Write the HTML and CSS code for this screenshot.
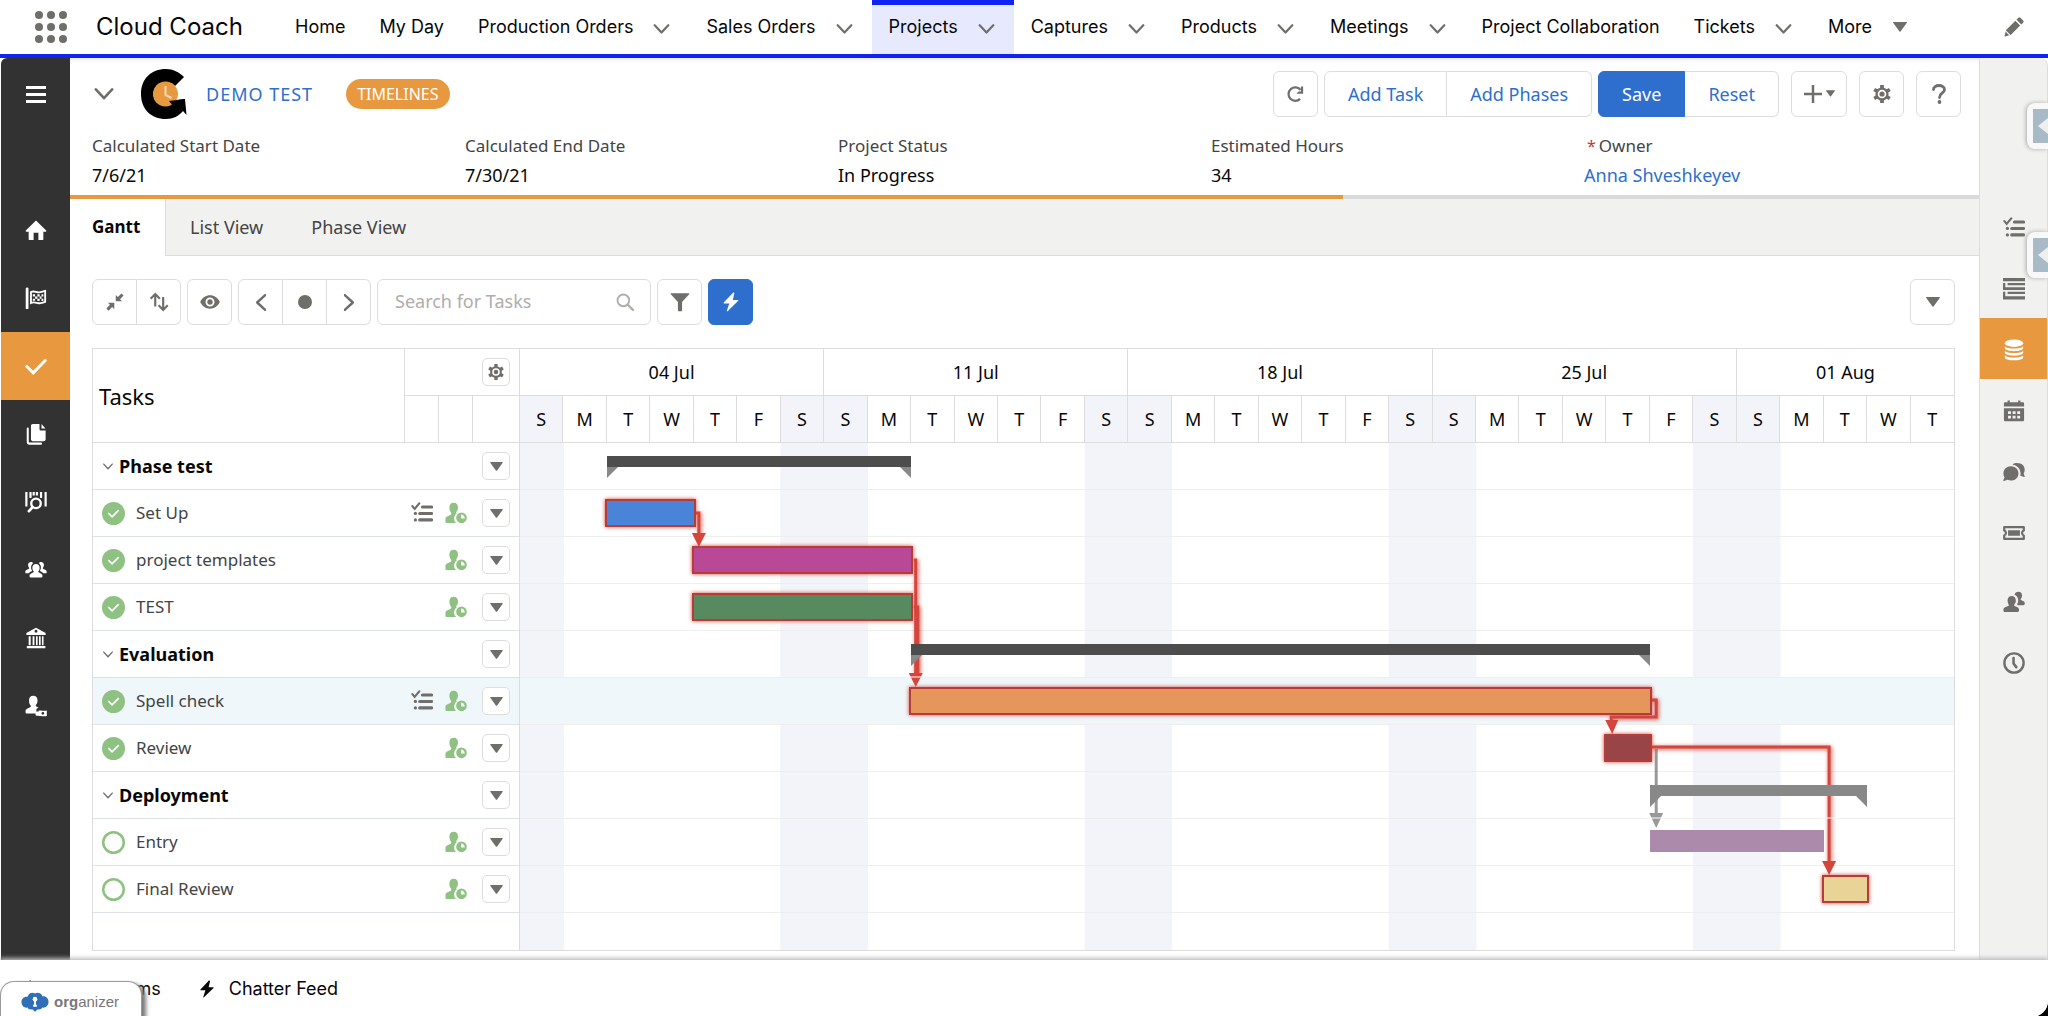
FILE: index.html
```
<!DOCTYPE html>
<html lang="en">
<head>
<meta charset="utf-8">
<title>DEMO TEST | Cloud Coach</title>
<link rel="stylesheet" href="styles.css">
</head>
<body>
<svg class="sprite" aria-hidden="true">
  <symbol id="chev" viewBox="0 0 16 10"><path d="M1.200 1.200 8 8.500 14.800 1.200" fill="none" stroke="currentColor" stroke-width="2.200" stroke-linecap="round" stroke-linejoin="round"/></symbol>
  <symbol id="down" viewBox="0 0 14 10"><path d="M.5 0h13a.5.5 0 0 1 .4.800L7.500 9.600a.7.7 0 0 1-1 0L.1.800A.5.5 0 0 1 .5 0z" fill="currentColor"/></symbol>
  <symbol id="home" viewBox="0 0 24 24"><path d="M12 1.500.9 12.600c-.4.400-.1 1.200.5 1.200H4v8.400c0 .4.300.8.800.8h4.600v-8h5.200v8h4.600c.5 0 .8-.4.800-.8v-8.400h2.600c.6 0 .9-.8.500-1.200z" fill="currentColor"/></symbol>
  <symbol id="flag" viewBox="0 0 24 24"><path d="M2.300 2v21" stroke="currentColor" stroke-width="3" stroke-linecap="round"/><path d="M6.500 5.500c3.500-1.800 6 .8 9 .4 2.200-.2 3.800-1 6.500-1.600v12c-2.500 1-4.500 1.600-7 1.400-3-.3-5-1.900-8.500-.2z" fill="none" stroke="currentColor" stroke-width="2"/><path d="M8.500 8h2.500v2.300H8.500zm5 0H16v2.300h-2.500zm4.500 0h2v2.300h-2zm-7 2.300h2.500v2.500H11zm5 0h2v2.500h-2zm-7.500 2.500H11V15H8.500zm5 0H16v2.400h-2.500zm4.500 0h2v2.400h-2z" fill="currentColor"/></symbol>
  <symbol id="check" viewBox="0 0 24 24"><path d="M2 12.500 9 19.500 22 6" fill="none" stroke="currentColor" stroke-width="3.200" stroke-linecap="round"/></symbol>
  <symbol id="files" viewBox="0 0 24 24"><path d="M8.500 1h7.300v5.500c0 1 .8 1.800 1.800 1.800h4.900v9.500c0 1.200-.8 2-2 2h-12c-1.200 0-2-.8-2-2V3c0-1.200.8-2 2-2zm9.500.2 4.300 4.700H18z" fill="currentColor"/><path d="M3 6v14.500C3 21.800 4 22.500 5 22.500h12.500" fill="none" stroke="currentColor" stroke-width="2.200" stroke-linecap="round"/></symbol>
  <symbol id="scan" viewBox="0 0 24 24"><path d="M1.500 1v16M6 1v6.500M9.500 1v4M13 1v4M17.500 1v6.500M22.500 1v16" stroke="currentColor" stroke-width="2.400" fill="none"/><circle cx="12" cy="13.500" r="5.200" fill="none" stroke="currentColor" stroke-width="2.600"/><path d="m8.300 17.500-4 4.500" stroke="currentColor" stroke-width="3" stroke-linecap="round"/></symbol>
  <symbol id="people" viewBox="0 0 26 24"><g fill="currentColor"><path d="M13 5c2.700 0 4.300 2 4.300 4.600 0 1.600-.6 3-1.500 3.900-.3.400-.3 1 .3 1.300l3 1.500c1.200.6 1.500 1.200 1.500 2.500v1c0 .8-.6 1.200-1.200 1.200H6.600c-.6 0-1.200-.4-1.200-1.200v-1c0-1.300.3-1.900 1.500-2.500l3-1.500c.6-.3.600-.9.300-1.300-.9-.9-1.500-2.300-1.500-3.900C8.700 7 10.300 5 13 5z"/><path d="M7.300 2.500C5 2.500 3.600 4 3.600 6.200c0 1.400.5 2.500 1.300 3.300.3.400.2.800-.2 1.100l-3 1.500C.6 12.700.4 13.300.4 14.300v.6c0 .8.400 1 1 1h2.800c.7-1 2.200-1.700 4.300-2.700-.9-1.200-1.400-2.800-1.300-4.600.1-1.900.9-3.500 2.400-4.600-.5-.9-1.200-1.500-2.300-1.500zM18.700 2.500c2.300 0 3.700 1.500 3.700 3.700 0 1.400-.5 2.500-1.300 3.300-.3.400-.2.800.2 1.100l3 1.500c1.100.6 1.300 1.200 1.300 2.200v.6c0 .8-.4 1-1 1h-2.800c-.7-1-2.200-1.700-4.300-2.700.9-1.200 1.400-2.800 1.300-4.600-.1-1.900-.9-3.500-2.400-4.600.5-.9 1.200-1.500 2.300-1.500z"/></g></symbol>
  <symbol id="bank" viewBox="0 0 24 24"><path fill-rule="evenodd" d="M12 .8 22.500 6.500v2.300h-21V6.500zM12 3a1.500 1.500 0 1 0 0 3.200A1.500 1.500 0 0 0 12 3zM4 10h2.200v10H4zm4.300 0h2v10h-2zm3.700 0h1.800v10H12zm3.300 0h1.800v10h-1.800zm3.200 0h1.700v10h-1.700zM2 20.800h20.200v2.400H2z" fill="currentColor"/></symbol>
  <symbol id="usercash" viewBox="0 0 24 24"><path d="M9 .8c3 0 4.700 2.200 4.700 5.100 0 1.900-.7 3.500-1.700 4.700-.5.700-.5 1.600.4 2l2.600 1.200c-1.500 0-2.600 1-2.600 2.500v4H2.200C1 20.300.6 19.700.6 18.900v-1.300c0-1.300.5-2 1.700-2.600l3.400-1.600c.8-.5.900-1.400.3-2.100C5 10 4.400 8.400 4.400 5.900 4.400 3 6 .8 9 .8z" fill="currentColor"/><rect x="11.500" y="18" width="5" height="4.500" rx="1" fill="currentColor"/><path fill-rule="evenodd" d="M15 17c3-.8 5 1 8.800 0v6c-3.500 1-5.800-.8-8.800 0zm4.500 1.500a1.500 1.500 0 1 0 0 3 1.500 1.500 0 0 0 0-3z" fill="currentColor"/></symbol>
  <symbol id="usertime" viewBox="0 0 24 24"><path d="M9.500.8c3 0 4.700 2.200 4.700 5.100 0 1.900-.7 3.500-1.700 4.700-.3.600-.3 1.300.2 1.700a7 7 0 0 0-.7 10.700H2C1 23 .5 22.500.5 21.500v-3.200c0-1.300.5-2 1.700-2.600l4-1.900c.8-.5.900-1.500.3-2.300-1-1.400-1.700-3-1.700-5.600C4.800 3 6.500.8 9.500.8z" fill="currentColor"/><path fill-rule="evenodd" d="M18 11.500a5.800 5.800 0 1 1 0 11.600 5.800 5.800 0 0 1 0-11.600zm-.4 2v4.400h4c0-2.500-1.500-4.400-4-4.400z" fill="currentColor"/></symbol>
  <symbol id="list" viewBox="0 0 24 24"><path d="m1.500 4.500 2.500 3L9 1.500" fill="none" stroke="currentColor" stroke-width="2.400" stroke-linecap="round"/><path d="M12.500 5.500h10M9.500 12.500h13M9.500 19.500h13" stroke="currentColor" stroke-width="3.400" stroke-linecap="round"/><circle cx="4.800" cy="12.500" r="1.800" fill="currentColor"/><circle cx="4.800" cy="19.500" r="1.800" fill="currentColor"/></symbol>
  <symbol id="outline" viewBox="0 0 24 24"><path d="M0 0h24v3.500H0zM5 5.500h19V8H5zM0 5.500h2.500V10H24v3H0zM5 15h19v2.500H5zM0 15h2.500v5H24v3.500H0z" fill="currentColor"/></symbol>
  <symbol id="data" viewBox="0 0 24 24"><ellipse cx="12" cy="4.600" rx="10" ry="4" fill="currentColor"/><path d="M2 7.800c2 3.400 18 3.400 20 0v2c0 4.600-20 4.600-20 0zm0 5c2 3.400 18 3.400 20 0v2c0 4.600-20 4.600-20 0zm0 5c2 3.400 18 3.400 20 0v2c0 4.600-20 4.600-20 0z" fill="currentColor"/></symbol>
  <symbol id="cal" viewBox="0 0 24 24"><path fill-rule="evenodd" d="M5 .5h2.500v2h9v-2H19v2h2.500c1 0 1.500.5 1.500 1.500v3H1V4c0-1 .5-1.500 1.500-1.500H5zM1 9h22v12.500c0 1-.5 1.700-1.500 1.700h-19C1.500 23.200 1 22.500 1 21.500zm4.500 3.300v3h3.200v-3zm5 0v3h3.200v-3zm5 0v3h3.200v-3zm-10 5v3h3.200v-3zm5 0v3h3.200v-3zm5 0v3h3.200v-3z" fill="currentColor"/></symbol>
  <symbol id="chat" viewBox="0 0 24 24"><path d="M8.700 5.800c4.600 0 8.200 3.300 8.200 7.700s-3.600 7.700-8.200 7.700c-1.300 0-2.500-.3-3.600-.8L1 21.700c-.5.200-.8-.2-.6-.6l1.300-3.300A7.600 7.600 0 0 1 .5 13.500c0-4.400 3.600-7.700 8.200-7.700z" fill="currentColor"/><path d="M15.500 2.300c4.600 0 8.200 3 8.200 7.200 0 1.500-.4 2.900-1.200 4l1.200 3.500c.1.400-.2.700-.6.500l-4.200-1.300c.2-.8.300-1.700.3-2.600 0-5-3.900-9.200-9-9.900a9 9 0 0 1 5.300-1.400z" fill="currentColor"/></symbol>
  <symbol id="ticket" viewBox="0 0 24 24"><path d="M1.300 5.500h21.400v3.700a3 3 0 0 0 0 5.600v3.700H1.300v-3.700a3 3 0 0 0 0-5.600z" fill="none" stroke="currentColor" stroke-width="2.400" stroke-linejoin="round"/><path d="M5.500 9h13v6h-13z" fill="currentColor"/></symbol>
  <symbol id="pair" viewBox="0 0 24 24"><path d="M9.500 5.500c2.800 0 4.500 2 4.500 4.800 0 1.700-.6 3.200-1.600 4.300-.4.600-.4 1.300.3 1.700l3 1.500c1.200.6 1.700 1.200 1.700 2.500v1c0 1-.6 1.700-1.500 1.700H2c-1 0-1.500-.7-1.500-1.700v-1c0-1.300.5-1.900 1.700-2.500l3.500-1.500c.8-.4.900-1.100.4-1.700C5.500 13.500 5 12 5 10.300 5 7.500 6.700 5.500 9.500 5.500z" fill="currentColor"/><path d="M17 .8c2.400 0 3.800 1.700 3.800 4.100 0 1.500-.5 2.700-1.300 3.600-.4.600-.4 1 .2 1.400l2.600 1.300c1 .5 1.400 1 1.400 2v.8c0 .9-.5 1.500-1.300 1.500h-6.200c-.8-.5-.7-1-.5-1.700 1-1.700 1-3 .8-4.500-.3-2.500-1.700-4.500-3.900-5.300C12.900 2.200 14.600.8 17 .8z" fill="currentColor"/></symbol>
  <symbol id="clock" viewBox="0 0 24 24"><circle cx="12" cy="12" r="10.500" fill="none" stroke="currentColor" stroke-width="2.600"/><path d="M11.500 6.500v6l3 4" fill="none" stroke="currentColor" stroke-width="2.800" stroke-linecap="round"/></symbol>
  <symbol id="gear" viewBox="0 0 24 24"><path d="M12 0v24M1.600 6l20.800 12M1.600 18 22.400 6" stroke="currentColor" stroke-width="5" fill="none"/><circle cx="12" cy="12" r="8.800" fill="currentColor"/><circle cx="12" cy="12" r="4.600" fill="none" stroke="#fff" stroke-width="2.300"/></symbol>
  <symbol id="pencil" viewBox="0 0 24 24"><path d="m2.600 15.500 11-11 5.800 5.800-11 11-7 2c-.5.100-.9-.3-.8-.8zM15 3.200l2.200-2.200c.7-.7 1.800-.7 2.500 0l3.300 3.300c.7.700.7 1.800 0 2.500L20.800 9z" fill="currentColor"/><path d="m2.300 17 4.700 4.700" stroke="#fff" stroke-width="1.300"/></symbol>
  <symbol id="bolt" viewBox="0 0 24 24"><path d="M14.500.8 3.300 12.700c-.4.500-.1 1.100.5 1.100h6.100L7 22.500c-.2.700.6 1 1 .6L20.700 10.600c.5-.5.100-1.100-.5-1.100h-6L16 1.500c.2-.8-.9-1.300-1.500-.7z" fill="currentColor"/></symbol>
  <symbol id="funnel" viewBox="0 0 24 24"><path d="M1.500 1.500h21c.7 0 1 .8.500 1.300L14.500 12v10.300c0 .4-.3.700-.7.700h-3.600c-.4 0-.7-.3-.7-.7V12L1 2.800C.5 2.300.8 1.500 1.500 1.500z" fill="currentColor"/></symbol>
  <symbol id="search" viewBox="0 0 24 24"><circle cx="9.800" cy="9.800" r="7.800" fill="none" stroke="currentColor" stroke-width="2.500"/><path d="m15.500 15.500 7 7" stroke="currentColor" stroke-width="3" stroke-linecap="round"/></symbol>
  <symbol id="eye" viewBox="0 0 24 24"><path fill-rule="evenodd" d="M12 4c5 0 9.200 3 11.500 7.400.2.400.2.800 0 1.200C21.200 17 17 20 12 20S2.800 17 .5 12.600a1.300 1.300 0 0 1 0-1.200C2.800 7 7 4 12 4zm0 2.600a5.400 5.400 0 1 0 0 10.800 5.400 5.400 0 0 0 0-10.800z" fill="currentColor"/><circle cx="12" cy="12" r="3.200" fill="currentColor"/></symbol>
  <symbol id="shrink" viewBox="0 0 24 24"><path d="M13 2.500v8.500h8.500l-2.800-2.800L23.500 3.400 20.600.5 15.800 5.300zM11 21.500V13H2.500l2.800 2.800L.5 20.600l2.900 2.900 4.800-4.800z" fill="currentColor"/></symbol>
  <symbol id="sort" viewBox="0 0 24 24"><path d="M7.500 17.500V3M2 8l5.500-5.500L13 8" fill="none" stroke="currentColor" stroke-width="2.600"/><path d="M17 6v15M11.500 16l5.500 5.500 5.500-5.500" fill="none" stroke="currentColor" stroke-width="2.600"/></symbol>
  <symbol id="refresh" viewBox="0 0 24 24"><path d="M17.500 18.500A9 9 0 1 1 18 6.500" fill="none" stroke="currentColor" stroke-width="3"/><path d="M21.500 2v9.500h-9l3-3h3V2z" fill="currentColor"/></symbol>
  <symbol id="done" viewBox="0 0 24 24"><circle cx="12" cy="12" r="12" fill="#8ec182"/><path d="m7 12 3.500 3.500 6.500-6.500" fill="none" stroke="#fff" stroke-width="1.800" stroke-linecap="round"/></symbol>
  <symbol id="open" viewBox="0 0 24 24"><circle cx="12" cy="12" r="10.700" fill="#fff" stroke="#8ec182" stroke-width="2.600"/></symbol>
</svg>

<header class="topnav">
  <button class="waffle" aria-label="App launcher"><i></i><i></i><i></i><i></i><i></i><i></i><i></i><i></i><i></i></button>
  <span class="app-name">Cloud Coach</span>
  <nav class="nav-items" aria-label="Main">
    <a href="#">Home</a>
    <a href="#">My Day</a>
    <a href="#">Production Orders<svg class="nav-chev"><use href="#chev"/></svg></a>
    <a href="#">Sales Orders<svg class="nav-chev"><use href="#chev"/></svg></a>
    <a href="#" class="current">Projects<svg class="nav-chev"><use href="#chev"/></svg></a>
    <a href="#">Captures<svg class="nav-chev"><use href="#chev"/></svg></a>
    <a href="#">Products<svg class="nav-chev"><use href="#chev"/></svg></a>
    <a href="#">Meetings<svg class="nav-chev"><use href="#chev"/></svg></a>
    <a href="#">Project Collaboration</a>
    <a href="#">Tickets<svg class="nav-chev"><use href="#chev"/></svg></a>
    <a href="#">More<svg class="nav-down"><use href="#down"/></svg></a>
  </nav>
  <button class="plain edit" aria-label="Edit navigation"><svg class="ic20"><use href="#pencil"/></svg></button>
</header>

<div class="shell">
  <nav class="rail-left" aria-label="Sections">
    <button class="menu" aria-label="Menu"><i></i><i></i><i></i></button>
    <a href="#" aria-label="Home"><svg><use href="#home"/></svg></a>
    <a href="#" aria-label="Milestones"><svg><use href="#flag"/></svg></a>
    <a href="#" class="active" aria-label="Tasks"><svg><use href="#check"/></svg></a>
    <a href="#" aria-label="Files"><svg><use href="#files"/></svg></a>
    <a href="#" aria-label="Products"><svg><use href="#scan"/></svg></a>
    <a href="#" aria-label="Team"><svg><use href="#people"/></svg></a>
    <a href="#" aria-label="Financials"><svg><use href="#bank"/></svg></a>
    <a href="#" aria-label="Rates"><svg><use href="#usercash"/></svg></a>
  </nav>

  <main>
    <section class="record">
      <div class="record-top">
        <button class="plain" aria-label="Collapse"><svg class="collapse"><use href="#chev"/></svg></button>
        <svg class="logo" viewBox="0 0 46 50" aria-hidden="true">
          <path d="M43 8 34 17C31 14 28 13 24.500 13c-7 0-12 5-12 12s5 12 12 12c2 0 4-.5 6-2l-2-3 15.500-2 1.500 16-3.500-4C38 47 32 50 25 50 10 50 0 40 0 25S10 0 25 0c7 0 13 3 18 8z"/>
          <circle cx="24.500" cy="25" r="12.500" fill="#e8993f"/>
          <path d="M24.500 17v9l6 3" fill="none" stroke="#f7dcb9" stroke-width="2"/>
          <path d="m28 32 16-2-8 12z"/>
        </svg>
        <h1><a href="#">DEMO TEST</a></h1>
        <span class="badge">TIMELINES</span>
        <div class="actions">
          <button class="btn sq" aria-label="Refresh"><svg class="ic18"><use href="#refresh"/></svg></button>
          <div class="group"><button class="btn">Add Task</button><button class="btn">Add Phases</button></div>
          <div class="group"><button class="btn primary">Save</button><button class="btn">Reset</button></div>
          <button class="btn add" aria-label="Add"><svg class="plus" viewBox="0 0 18 18"><path d="M9 0v18M0 9h18" stroke="currentColor" stroke-width="2.500"/></svg><svg class="tiny"><use href="#down"/></svg></button>
          <button class="btn sq apart" aria-label="Settings"><svg class="ic18"><use href="#gear"/></svg></button>
          <button class="btn sq apart" aria-label="Help"><svg class="help" viewBox="0 0 14 20"><path d="M1.500 5.500C1.500 3 4 1.500 7 1.500s5.500 1.500 5.500 4.200C12.500 9 7.500 9 7.500 13.500" fill="none" stroke="currentColor" stroke-width="2.800" stroke-linecap="round"/><circle cx="7.500" cy="18" r="1.900" fill="currentColor"/></svg></button>
        </div>
      </div>
      <dl class="fields">
        <div><dt>Calculated Start Date</dt><dd>7/6/21</dd></div>
        <div><dt>Calculated End Date</dt><dd>7/30/21</dd></div>
        <div><dt>Project Status</dt><dd>In Progress</dd></div>
        <div><dt>Estimated Hours</dt><dd>34</dd></div>
        <div><dt><abbr title="required">*</abbr>Owner</dt><dd><a href="#">Anna Shveshkeyev</a></dd></div>
      </dl>
      <div class="progress"><span style="width:66.7%"></span></div>
    </section>

    <nav class="tabs" aria-label="Views">
      <a href="#" class="selected">Gantt</a>
      <div class="other-tabs"><a href="#">List View</a><a href="#">Phase View</a></div>
    </nav>

    <section class="content">
      <div class="toolbar">
        <div class="group"><button class="btn sq" aria-label="Collapse all"><svg class="ic18"><use href="#shrink"/></svg></button><button class="btn sq" aria-label="Sort"><svg class="ic20"><use href="#sort"/></svg></button></div>
        <button class="btn sq" aria-label="Show"><svg class="ic20"><use href="#eye"/></svg></button>
        <div class="group"><button class="btn sq" aria-label="Earlier"><svg class="side left"><use href="#chev"/></svg></button><button class="btn sq" aria-label="Today"><span class="dot"></span></button><button class="btn sq" aria-label="Later"><svg class="side right"><use href="#chev"/></svg></button></div>
        <label class="search"><input type="search" placeholder="Search for Tasks" aria-label="Search for Tasks"><svg class="ic18"><use href="#search"/></svg></label>
        <button class="btn sq" aria-label="Filter"><svg class="ic20"><use href="#funnel"/></svg></button>
        <button class="btn sq primary" aria-label="Quick actions"><svg class="ic20"><use href="#bolt"/></svg></button>
        <button class="btn sq last" aria-label="More options"><svg class="down"><use href="#down"/></svg></button>
      </div>

      <div class="gantt">
        <table class="tasks">
          <colgroup><col><col class="c-list"><col class="c-user"><col class="c-menu"></colgroup>
          <thead>
            <tr><th rowspan="2" class="title">Tasks</th><th colspan="3" class="cfg"><button class="mini" aria-label="Column settings"><svg class="ic15"><use href="#gear"/></svg></button></th></tr>
            <tr><th></th><th></th><th></th></tr>
          </thead>
          <tbody>
            <tr class="phase"><td colspan="3"><div class="cell"><svg><use href="#chev"/></svg>Phase test</div></td><td><button class="mini" aria-label="Phase test menu"><svg class="down"><use href="#down"/></svg></button></td></tr>
            <tr><td><div class="cell"><svg><use href="#done"/></svg>Set Up</div></td><td><svg class="lst"><use href="#list"/></svg></td><td><svg class="usr"><use href="#usertime"/></svg></td><td><button class="mini" aria-label="Set Up menu"><svg class="down"><use href="#down"/></svg></button></td></tr>
            <tr><td><div class="cell"><svg><use href="#done"/></svg>project templates</div></td><td></td><td><svg class="usr"><use href="#usertime"/></svg></td><td><button class="mini" aria-label="project templates menu"><svg class="down"><use href="#down"/></svg></button></td></tr>
            <tr><td><div class="cell"><svg><use href="#done"/></svg>TEST</div></td><td></td><td><svg class="usr"><use href="#usertime"/></svg></td><td><button class="mini" aria-label="TEST menu"><svg class="down"><use href="#down"/></svg></button></td></tr>
            <tr class="phase"><td colspan="3"><div class="cell"><svg><use href="#chev"/></svg>Evaluation</div></td><td><button class="mini" aria-label="Evaluation menu"><svg class="down"><use href="#down"/></svg></button></td></tr>
            <tr class="hover"><td><div class="cell"><svg><use href="#done"/></svg>Spell check</div></td><td><svg class="lst"><use href="#list"/></svg></td><td><svg class="usr"><use href="#usertime"/></svg></td><td><button class="mini" aria-label="Spell check menu"><svg class="down"><use href="#down"/></svg></button></td></tr>
            <tr><td><div class="cell"><svg><use href="#done"/></svg>Review</div></td><td></td><td><svg class="usr"><use href="#usertime"/></svg></td><td><button class="mini" aria-label="Review menu"><svg class="down"><use href="#down"/></svg></button></td></tr>
            <tr class="phase"><td colspan="3"><div class="cell"><svg><use href="#chev"/></svg>Deployment</div></td><td><button class="mini" aria-label="Deployment menu"><svg class="down"><use href="#down"/></svg></button></td></tr>
            <tr><td><div class="cell"><svg><use href="#open"/></svg>Entry</div></td><td></td><td><svg class="usr"><use href="#usertime"/></svg></td><td><button class="mini" aria-label="Entry menu"><svg class="down"><use href="#down"/></svg></button></td></tr>
            <tr><td><div class="cell"><svg><use href="#open"/></svg>Final Review</div></td><td></td><td><svg class="usr"><use href="#usertime"/></svg></td><td><button class="mini" aria-label="Final Review menu"><svg class="down"><use href="#down"/></svg></button></td></tr>
          </tbody>
        </table>

        <div class="chart">
          <div class="weeks"><span>04 Jul</span><span>11 Jul</span><span>18 Jul</span><span>25 Jul</span><span>01 Aug</span></div>
          <div class="days">
            <span>S</span><span>M</span><span>T</span><span>W</span><span>T</span><span>F</span><span>S</span>
            <span>S</span><span>M</span><span>T</span><span>W</span><span>T</span><span>F</span><span>S</span>
            <span>S</span><span>M</span><span>T</span><span>W</span><span>T</span><span>F</span><span>S</span>
            <span>S</span><span>M</span><span>T</span><span>W</span><span>T</span><span>F</span><span>S</span>
            <span>S</span><span>M</span><span>T</span><span>W</span><span>T</span>
          </div>
          <div class="plot">
            <div class="lane"><div class="summary done" style="--start:2;--days:7"></div></div>
            <div class="lane"><div class="bar critical blue" style="--start:2;--days:2"></div></div>
            <div class="lane"><div class="bar critical magenta" style="--start:4;--days:5"></div></div>
            <div class="lane"><div class="bar critical green" style="--start:4;--days:5"></div></div>
            <div class="lane"><div class="summary done" style="--start:9;--days:17"></div></div>
            <div class="lane hover"><div class="bar critical orange" style="--start:9;--days:17"></div></div>
            <div class="lane"><div class="bar critical brick" style="--start:25;--days:1"></div></div>
            <div class="lane"><div class="summary" style="--start:26;--days:5"></div></div>
            <div class="lane"><div class="bar mauve" style="--start:26;--days:4"></div></div>
            <div class="lane"><div class="bar critical sand" style="--start:30;--days:1"></div></div>
            <svg class="links" viewBox="0 0 1435 507" preserveAspectRatio="none" aria-hidden="true">
              <path class="soft" d="M1137 306v66"/>
              <path class="soft-head" d="M1130 370h14l-7 15z"/>
              <g class="hot">
                <path d="M176 70h3v22"/>
                <path d="M394 117h2v115M394 164h4v68"/>
                <path d="M1132 257h5v17h-45v6"/>
                <path d="M1132 304h178v116"/>
              </g>
              <path class="hot-head" d="M172 90h14l-7 14zM389 230h14l-7 14zM1086 277h13l-6 14zM1303 418h14l-7 14z"/>
              <path class="cut" d="M387 234h18M1128 375h18M1302 375h16"/>
            </svg>
          </div>
        </div>
      </div>
    </section>
  </main>

  <nav class="rail-right" aria-label="Panels">
    <a href="#" aria-label="Checklist"><svg><use href="#list"/></svg></a>
    <a href="#" aria-label="Outline"><svg><use href="#outline"/></svg></a>
    <a href="#" class="active" aria-label="Data"><svg><use href="#data"/></svg></a>
    <a href="#" aria-label="Calendar"><svg><use href="#cal"/></svg></a>
    <a href="#" aria-label="Chatter"><svg><use href="#chat"/></svg></a>
    <a href="#" aria-label="Tickets"><svg><use href="#ticket"/></svg></a>
    <a href="#" class="split" aria-label="Contacts"><svg><use href="#pair"/></svg></a>
    <a href="#" aria-label="History"><svg><use href="#clock"/></svg></a>
    <button class="drawer first" aria-label="Open drawer"><span></span></button>
    <button class="drawer second" aria-label="Open drawer"><span></span></button>
  </nav>
</div>

<footer class="utility">
  <button class="plain"><svg class="ic18"><use href="#bolt"/></svg>Recent Items</button>
  <button class="plain"><svg class="ic18"><use href="#bolt"/></svg>Chatter Feed</button>
  <div class="organizer">
    <svg viewBox="0 0 30 22" aria-hidden="true"><path d="M7 5.500C8 2 12 0 15 2c3-2 7-.5 8 3 4-.5 6.500 2.500 6.500 6s-3 6.500-6.500 6c-1 2-3.500 2.500-5 1.800L15 21.500l-3-2.700c-2 .7-4.500 0-5-1.800-4 .5-6.500-2.500-6.500-6s3-6 6.500-5.500z" fill="#2f6fb7"/><circle cx="15" cy="8" r="2.500" fill="#fff"/><path d="M14 9h2v5h1v2h-4v-2h1z" fill="#fff"/></svg>
    <span><b>org</b>anizer</span>
  </div>
</footer>
</body>
</html>
```
FILE: styles.css
```
* { box-sizing: border-box; }
:root {
  --orange: #e8993f;
  --blue: #2e6fce;
  --icon: #706e6b;
  --line: #dddddd;
  --weekend: #f3f4f9;
  --hover: #eff7fb;
  --row: 47px;
}
html { background: #000; }
body {
  margin: 0;
  min-height: 100vh;
  display: flex;
  flex-direction: column;
  background: #fff;
  border-bottom-right-radius: 16px;
  color: #080707;
  font: 18px/24px "Noto Sans", "Open Sans", sans-serif;
}
a { color: inherit; text-decoration: none; }
button { font: inherit; color: inherit; cursor: pointer; }
svg { display: block; flex: none; }
.sprite { position: absolute; width: 0; height: 0; }
.plain { border: 0; background: none; padding: 0; }
.ic15 { width: 16px; height: 16px; }
.ic18 { width: 18px; height: 18px; }
.ic20 { width: 20px; height: 20px; }

/* Top navigation */
.topnav {
  height: 58px;
  flex: none;
  display: flex;
  align-items: stretch;
  border-bottom: 4px solid #1023f0;
  font-family: Inter, "Liberation Sans", sans-serif;
  padding-right: 24px;
}
.waffle {
  align-self: center;
  margin: 0 29px 0 35px;
  padding: 0;
  border: 0;
  background: none;
  display: grid;
  grid-template-columns: repeat(3, 8px);
  gap: 4px;
}
.waffle i { width: 8px; height: 8px; border-radius: 50%; background: var(--icon); }
.app-name { align-self: center; font-size: 24px; line-height: 32px; width: 182px; white-space: nowrap; }
.nav-items { display: flex; }
.nav-items a { display: flex; align-items: center; padding: 0 17px; white-space: nowrap; font-size: 18px; border-top: 5px solid transparent; border-bottom: 5px solid transparent; }
.nav-items a.current { background: #e7e9fe; border-top-color: #1023f0; border-bottom-color: #e7e9fe; }
.nav-chev { width: 17px; height: 10px; margin: 4px 2px 0 20px; color: var(--icon); }
.nav-down { width: 16px; height: 10px; margin-left: 20px; color: var(--icon); }
.edit { margin-left: auto; color: var(--icon); }

/* Shell */
.shell { flex: 1; display: flex; align-items: stretch; }
main { flex: 1; min-width: 0; box-shadow: inset 0 4px 4px -3px #ddd; }
.rail-left {
  width: 69px;
  margin-left: 1px;
  background: #323232;
  border-top-left-radius: 6px;
  color: #fff;
}
.rail-left a { height: 68px; display: flex; align-items: center; justify-content: center; }
.rail-left svg { width: 22px; height: 22px; }
.rail-left .active, .rail-right .active { background: var(--orange); color: #fff; }
.menu { width: 100%; height: 72px; margin-bottom: 66px; padding: 0; border: 0; background: none; display: flex; flex-direction: column; align-items: center; justify-content: center; gap: 4px; }
.menu i { width: 20px; height: 3px; background: #fff; }

.rail-right {
  position: relative;
  width: 69px;
  padding-top: 138px;
  background: #f1f1f0;
  border: solid var(--line);
  border-width: 0 1px;
  border-top-right-radius: 8px;
  color: var(--icon);
}
.rail-right a { height: 61px; padding-top: 3px; display: flex; align-items: center; justify-content: center; }
.rail-right svg { width: 22px; height: 22px; }
.rail-right .split { margin-top: 8px; }
.drawer { position: absolute; right: -1px; width: 21px; height: 46px; padding: 6px 0 6px 6px; border: 0; border-radius: 8px 0 0 8px; background: #f8f8f8; box-shadow: -1px 0 4px #aaa; }
.drawer.first { top: 45px; }
.drawer.second { top: 174px; }
.drawer span { display: block; height: 34px; padding-top: 9px; background: #a7bac6; }
.drawer span::before { content: ""; display: block; margin-left: 5px; border: solid transparent; border-width: 8px 10px 8px 0; border-right-color: #eee; }

/* Record header */
.record-top { display: flex; align-items: center; height: 71px; padding: 0 18px 0 24px; }
.collapse { width: 20px; height: 12px; color: var(--icon); }
.logo { width: 46px; height: 50px; margin-left: 27px; }
h1 { margin: 0 0 0 19px; font-size: 18px; line-height: 24px; font-weight: 400; letter-spacing: 1px; color: var(--blue); }
.badge { margin-left: 33px; padding: 0 11px; height: 30px; border-radius: 15px; background: var(--orange); color: #fff; font-size: 16px; line-height: 30px; }
.actions { display: flex; gap: 6px; margin-left: auto; }
.btn {
  height: 46px;
  padding: 0 23px;
  display: flex;
  align-items: center;
  justify-content: center;
  border: 1px solid var(--line);
  border-radius: 6px;
  background: #fff;
  color: var(--blue);
  white-space: nowrap;
}
.btn.sq { width: 45px; padding: 0; color: var(--icon); }
.btn.primary { background: var(--blue); border-color: var(--blue); color: #fff; }
.btn.add { width: 56px; padding: 0; gap: 4px; color: var(--icon); margin-left: 6px; }
.btn.apart { margin-left: 6px; }
.group { display: flex; }
.group .btn + .btn { border-left: 0; }
.group .btn.sq + .btn.sq { width: 44px; }
.group .btn:not(:first-child) { border-top-left-radius: 0; border-bottom-left-radius: 0; }
.group .btn:not(:last-child) { border-top-right-radius: 0; border-bottom-right-radius: 0; }
.plus { width: 18px; height: 18px; }
.tiny { width: 9px; height: 7px; }
.help { width: 14px; height: 20px; }
.fields { display: grid; grid-template-columns: repeat(5, 1fr); margin: 0; padding: 5px 22px 6px; height: 66px; }
.fields dt { font-size: 17px; line-height: 24px; color: #444; }
.fields dd { margin: 4px 0 0; line-height: 26px; }
.fields dd a { color: var(--blue); }
.fields abbr { color: #c23934; text-decoration: none; margin: 0 3px; font-size: 16px; }
.progress { height: 4px; background: #dadada; }
.progress span { display: block; height: 4px; background: var(--orange); }

/* View tabs */
.tabs { display: flex; height: 57px; line-height: 56px; color: #444; }
.tabs a { padding: 0 24px; }
.tabs .selected { width: 95px; padding: 0 0 0 22px; font-size: 17px; font-weight: 700; color: #080707; }
.other-tabs { flex: 1; display: flex; background: #f1f1f0; border-left: 1px solid var(--line); border-bottom: 1px solid var(--line); }

/* Toolbar */
.content { padding: 23px 24px 9px 22px; }
.toolbar { display: flex; gap: 6px; }
.search { position: relative; width: 274px; }
.search input { width: 100%; height: 46px; padding: 0 48px 2px 17px; border: 1px solid var(--line); border-radius: 6px; font: inherit; background: #fff; }
.search input::placeholder { color: #b0adab; opacity: 1; }
.search svg { position: absolute; right: 17px; top: 14px; color: #b0adab; }
.last { margin-left: auto; }
.down { width: 14px; height: 10px; }
.dot { width: 14px; height: 14px; border-radius: 50%; background: var(--icon); }
.side { width: 18px; height: 11px; }
.left { transform: rotate(90deg); }
.right { transform: rotate(-90deg); }

/* Gantt */
.gantt { display: flex; margin-top: 23px; border: 1px solid var(--line); min-height: 603px; }
.tasks { width: 427px; flex: none; align-self: flex-start; table-layout: fixed; border-collapse: separate; border-spacing: 0; color: #444; font-size: 17px; }
.c-list { width: 34px; }
.c-user { width: 34px; }
.c-menu { width: 48px; }
.tasks th, .tasks td { height: var(--row); padding: 0; border-bottom: 1px solid #dde1e8; text-align: left; }
.tasks th { border-bottom-color: var(--line); }
.tasks th + th, .tasks thead tr + tr th { border-left: 1px solid var(--line); }
.tasks .title { padding: 0 0 0 6px; font-size: 22px; font-weight: 400; color: #080707; }
.cell { display: flex; align-items: center; gap: 11px; padding-left: 9px; }
.cell svg { width: 23px; height: 23px; }
.phase .cell { gap: 6px; padding-left: 10px; font-size: 18px; font-weight: 700; color: #080707; }
.phase .cell svg { width: 10px; height: 7px; color: var(--icon); }
.mini { width: 28px; height: 28px; margin: 0 10px 0 auto; padding: 0; display: flex; align-items: center; justify-content: center; border: 1px solid var(--line); border-radius: 5px; background: #fff; color: var(--icon); }
.mini .down { width: 13px; height: 9px; }
.lst, .usr { width: 22px; height: 22px; margin-left: 7px; color: var(--icon); }
.usr { color: #8ec182; }
.hover { background: var(--hover); }

.chart { flex: 1; min-width: 0; display: flex; flex-direction: column; border-left: 1px solid var(--line); margin-left: -1px; }
.weeks { display: grid; grid-template-columns: repeat(4, 7fr) 5fr; text-align: center; }
.weeks span, .days span { height: var(--row); line-height: 46px; border-bottom: 1px solid var(--line); border-right: 1px solid var(--line); }
.weeks span:last-child, .days span:last-child { border-right: 0; }
.days { display: grid; grid-template-columns: repeat(33, 1fr); text-align: center; }
.days span { min-width: 0; }
.days span:nth-child(7n+1), .days span:nth-child(7n) { background: var(--weekend); }
.plot {
  position: relative;
  flex: 1;
  background-image: linear-gradient(to right, var(--weekend) calc(100% / 7), transparent calc(100% / 7) calc(600% / 7), var(--weekend) calc(600% / 7));
  background-size: calc(700% / 33) 100%;
}
.lane { position: relative; height: var(--row); border-bottom: 1px solid #eee; }
.bar, .summary { position: absolute; z-index: 2; left: calc(100% / 33 * var(--start)); width: calc(100% / 33 * var(--days)); }
.bar { top: 11px; height: 24px; }
.critical { outline: 2px solid #b53c38; box-shadow: 0 0 4px 2px #d4453b; }
.blue { background: #4a84d8; }
.magenta { background: #b94997; }
.green { background: #588a5f; }
.orange { background: #e6965b; }
.brick { background: #994547; }
.mauve { background: #ac8aab; height: 22px; }
.sand { background: #e9d397; }
.summary { top: 13px; height: 11px; background: #888; }
.summary.done { background: #4d4d4d; }
.summary::before, .summary::after { content: ""; position: absolute; top: 11px; border-top: 11px solid #888; }
.summary::before { left: 0; border-right: 11px solid transparent; }
.summary::after { right: 0; border-left: 11px solid transparent; }
.links { position: absolute; z-index: 1; left: 0; top: 0; width: 100%; height: 507px; overflow: visible; }
.hot { fill: none; stroke: #d4453b; stroke-width: 3; filter: drop-shadow(1px 1px 2px #d4453b); }
.hot-head { fill: #d4453b; }
.soft { fill: none; stroke: #999; stroke-width: 3; }
.soft-head { fill: #999; }
.cut { stroke: #fff; stroke-width: 1; }

/* Utility bar */
.utility { position: relative; height: 57px; flex: none; display: flex; align-items: center; padding-left: 19px; gap: 37px; border-bottom-right-radius: 16px; background: #fff; box-shadow: 0 -2px 4px #bbb; font: 18px/24px Inter, "Liberation Sans", sans-serif; }
.utility button { display: flex; align-items: center; gap: 13px; }
.organizer { position: absolute; left: 0; bottom: 0; width: 142px; height: 36px; padding: 4px 0 0 20px; display: flex; align-items: center; gap: 5px; border: 1px solid #999; border-bottom: 0; border-radius: 14px 14px 0 0; background: #fff; box-shadow: 4px 3px 4px #777; color: #777; font: 15px/20px "Liberation Sans", Arial, sans-serif; }
.organizer svg { width: 28px; height: 22px; }
```
